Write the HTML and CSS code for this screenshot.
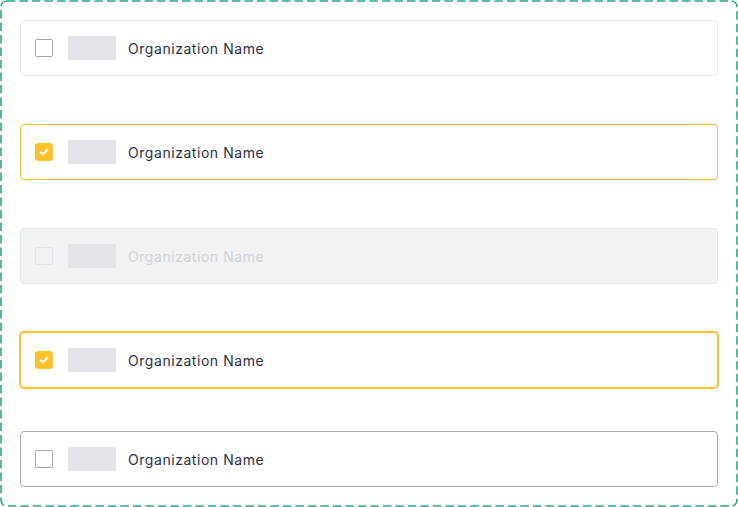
FILE: index.html
```html
<!DOCTYPE html>
<html lang="en">
<head>
    <meta charset="UTF-8">
    <meta name="viewport" content="width=device-width, initial-scale=1.0">
    <title>Organization options</title>
    <link rel="stylesheet" href="styles.css">
</head>
<body>
    <div class="frame">
        <svg class="frame-border" width="738" height="507" viewBox="0 0 738 507">
            <rect x="1" y="1" width="736" height="505" rx="6" ry="6" fill="none" stroke="#2aa88b" stroke-width="1.6" stroke-dasharray="8.5 4"/>
        </svg>

        <label class="org-item">
            <span class="box"></span>
            <span class="logo"></span>
            <span class="org-name">Organization Name</span>
        </label>

        <label class="org-item checked">
            <span class="box">
                <svg width="12" height="12" viewBox="0 0 12 12"><path d="M2.6 6.2 L5 8.4 L9.4 3.8" fill="none" stroke="#fff" stroke-width="2" stroke-linecap="round" stroke-linejoin="round"/></svg>
            </span>
            <span class="logo"></span>
            <span class="org-name">Organization Name</span>
        </label>

        <label class="org-item disabled">
            <span class="box"></span>
            <span class="logo"></span>
            <span class="org-name">Organization Name</span>
        </label>

        <label class="org-item checked focused">
            <span class="box">
                <svg width="12" height="12" viewBox="0 0 12 12"><path d="M2.6 6.2 L5 8.4 L9.4 3.8" fill="none" stroke="#fff" stroke-width="2" stroke-linecap="round" stroke-linejoin="round"/></svg>
            </span>
            <span class="logo"></span>
            <span class="org-name">Organization Name</span>
        </label>

        <label class="org-item hover">
            <span class="box"></span>
            <span class="logo"></span>
            <span class="org-name">Organization Name</span>
        </label>
    </div>
</body>
</html>
```

FILE: styles.css
```css
body {
    margin: 0;
    background: #fff;
    font-family: Inter, "Noto Sans", sans-serif;
}
.frame {
    position: relative;
    width: 738px;
    height: 507px;
    box-sizing: border-box;
    padding: 20px;
    display: flex;
    flex-direction: column;
}
.frame-border {
    position: absolute;
    left: 0;
    top: 0;
}
.org-item {
    display: flex;
    align-items: center;
    height: 56px;
    box-sizing: border-box;
    padding: 0 14px;
    border: 1px solid #e4e5ea;
    border-radius: 4px;
    background: #fff;
    margin-bottom: 48px;
}
.org-item.focused {
    margin-bottom: 43px;
    border-color: #fbc02d;
    box-shadow: 0 0 0 1px #fbc02d;
}
.org-item:last-child {
    margin-bottom: 0;
    height: 56px;
}
.box {
    width: 18px;
    height: 18px;
    box-sizing: border-box;
    border: 1px solid #a3a7b4;
    border-radius: 2px;
    display: flex;
    align-items: center;
    justify-content: center;
}
.logo {
    width: 48px;
    height: 24px;
    background: #e4e5ea;
    margin-left: 15px;
}
.org-name {
    margin-left: 12px;
    font-size: 14px;
    color: #2c2e45;
    letter-spacing: 0.55px;
}
.checked {
    border-color: #fbc02d;
}
.checked .box {
    background: #fbc02d;
    border-color: #fbc02d;
    border-radius: 3px;
}
.disabled {
    background: #f1f2f4;
    border-color: #e6e7ea;
}
.disabled .box {
    border-color: #e4e5ea;
}
.disabled .org-name {
    color: #d2d4da;
}
.hover {
    border-color: #a8acb8;
}
```
